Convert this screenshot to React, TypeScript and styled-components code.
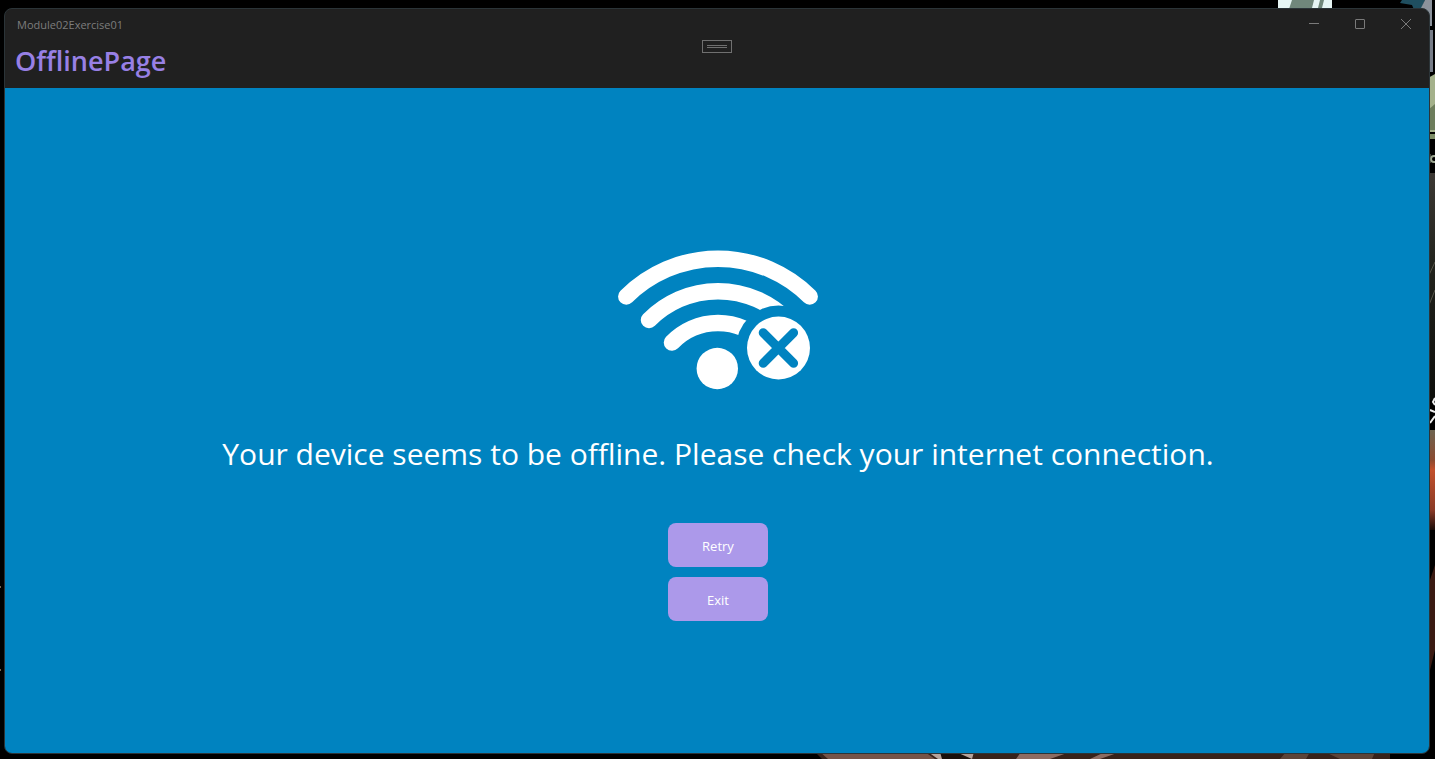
import React from "react";
import styled, { createGlobalStyle } from "styled-components";

const GlobalStyle = createGlobalStyle`
  *, *::before, *::after { box-sizing: border-box; }
  body {
    margin: 0;
    background: #000;
    font-family: "Segoe UI", "Open Sans", sans-serif;
  }
`;

const Desktop = styled.div`
  position: relative;
  display: flex;
  min-height: 100vh;
  padding: 8px 5px 5px 4px;
  overflow: hidden;
`;

const Wallpaper = styled.svg`
  position: absolute;
  inset: 0;
  width: 100%;
  height: 100%;
`;

const AppWindow = styled.main`
  position: relative;
  display: flex;
  flex: 1;
  flex-direction: column;
  border: 1px solid #2b3438;
  border-radius: 8px;
  background: #202020;
  overflow: hidden;
`;

const TitleBar = styled.header`
  display: flex;
  justify-content: space-between;
  height: 31px;
  padding-left: 12px;
`;

const WindowTitle = styled.span`
  color: #7d7d7d;
  font-size: 11px;
  line-height: 31px;
`;

const Controls = styled.div`
  display: flex;
`;

const ControlButton = styled.button`
  display: grid;
  place-items: center;
  width: 46px;
  height: 30px;
  padding: 0;
  border: 0;
  background: transparent;
  color: #7a7a7a;
`;

const NavBar = styled.div`
  display: grid;
  grid-template-columns: 1fr auto 1fr;
  align-items: start;
  height: 48px;
  padding: 0 10px;
`;

const PageTitle = styled.h1`
  margin: 0;
  color: #9880e5;
  font-size: 27px;
  font-weight: 600;
  line-height: 42px;
`;

const ToolbarHandle = styled.button`
  display: grid;
  place-items: center;
  width: 30px;
  height: 13px;
  padding: 0;
  border: 1px solid #707070;
  background: transparent;
  color: #707070;
`;

const Content = styled.section`
  display: flex;
  flex: 1;
  flex-direction: column;
  align-items: center;
  justify-content: center;
  padding: 0 10px 1px 12px;
  background: #0083c0;
`;

const OfflineIcon = styled.svg`
  width: 200px;
  height: 200px;
`;

const Message = styled.p`
  margin: 13px 0 48px;
  color: #fff;
  font-size: 30px;
  line-height: 42px;
  text-align: center;
`;

const Actions = styled.div`
  display: flex;
  flex-direction: column;
  gap: 10px;
`;

const ActionButton = styled.button`
  width: 100px;
  height: 44px;
  padding: 2px 0 0;
  border: 0;
  border-radius: 8px;
  background: #ac99ea;
  color: #fff;
  font-family: inherit;
  font-size: 13px;
  line-height: 20px;
`;

export default function App() {
  return (
    <Desktop>
      <GlobalStyle />
      <Wallpaper viewBox="0 0 1435 759" preserveAspectRatio="none" aria-hidden="true">
        <defs>
          <linearGradient id="ember" x1="0" y1="0" x2="0" y2="1">
            <stop offset="0" stopColor="#6e6450" />
            <stop offset="0.300" stopColor="#8a4a30" />
            <stop offset="0.400" stopColor="#c2502c" />
            <stop offset="0.800" stopColor="#8a3a26" />
            <stop offset="1" stopColor="#1a0c08" />
          </linearGradient>
          <linearGradient id="shade" x1="0" y1="0" x2="0" y2="1">
            <stop offset="0" stopColor="#3b3833" />
            <stop offset="0.400" stopColor="#22231d" />
            <stop offset="1" stopColor="#0d0e0b" />
          </linearGradient>
        </defs>
        <path d="M1278 0H1332V12H1278z" fill="#e6f5f4" />
        <path d="M1292 0H1314L1311 12H1288zM1320 0H1324L1321 12H1317z" fill="#70877b" />
        <path d="M1402 0H1425L1420 12H1415L1412 5L1400 3z" fill="#1f4f60" />
        <path d="M1425 0H1432V26H1426L1420 10z" fill="#8b929b" />
        <path d="M1428 30H1433V72H1428z" fill="#777d88" />
        <path d="M1428 78L1435 74V132H1428z" fill="#a4b18b" />
        <path d="M1428 110L1435 104V130H1428z" fill="#6d7d5c" />
        <path d="M1428 134H1435V139H1428z" fill="#7d8d66" />
        <circle cx="1434" cy="159" r="3" fill="none" stroke="#9ba58f" strokeWidth="2" />
        <path d="M1430 154V163" stroke="#7d8577" />
        <path d="M1428 173H1435V400H1428z" fill="url(#shade)" />
        <path d="M1429 275L1435 262M1429 305L1435 290" stroke="#55554a" />
        <path d="M1430 423L1435 416M1430 410L1435 412M1435 398L1433 402L1435 405" fill="none" stroke="#eee" strokeWidth="2" />
        <path d="M1428 430H1435V530H1428z" fill="url(#ember)" />
        <path d="M1430 580L1435 565V650L1430 670z" fill="#3a1a12" />
        <path d="M815 752H1390V759H822z" fill="#38221a" />
        <path d="M820 752H925L935 759H828z" fill="#765448" />
        <path d="M928 752H974L972 759H938z" fill="#b6a29a" />
        <path d="M940 752H956L972 759H942z" fill="#1a100c" />
        <path d="M1021 752H1070L1050 759H1016zM1105 752H1120L1100 759H1090z" fill="#8d6c62" />
        <path d="M1286 752H1310L1306 759H1280zM1325 752H1375L1372 759H1340z" fill="#5d4438" />
        <path d="M0 586H1V588H0zM0 669H1V671H0z" fill="#7b6651" />
      </Wallpaper>

      <AppWindow>
        <TitleBar>
          <WindowTitle>Module02Exercise01</WindowTitle>
          <Controls>
            <ControlButton type="button" aria-label="Minimize">
              <svg width="10" height="10" viewBox="0 0 10 10" fill="none" stroke="currentColor">
                <path d="M0 4.500H10" />
              </svg>
            </ControlButton>
            <ControlButton type="button" aria-label="Maximize">
              <svg width="10" height="10" viewBox="0 0 10 10" fill="none" stroke="currentColor">
                <rect x="0.500" y="0.500" width="9" height="9" rx="0.500" />
              </svg>
            </ControlButton>
            <ControlButton type="button" aria-label="Close">
              <svg width="10" height="10" viewBox="0 0 10 10" fill="none" stroke="currentColor">
                <path d="M0 0L10 10M10 0L0 10" />
              </svg>
            </ControlButton>
          </Controls>
        </TitleBar>
        <NavBar>
          <PageTitle>OfflinePage</PageTitle>
          <ToolbarHandle type="button" aria-label="Show toolbar">
            <svg width="20" height="5" viewBox="0 0 20 5" stroke="currentColor">
              <path d="M0 1.500H20M0 3.500H20" />
            </svg>
          </ToolbarHandle>
        </NavBar>
        <Content>
          <OfflineIcon viewBox="0 0 200 200" role="img" aria-label="No connection">
            <defs>
              <mask id="badge-gap" maskUnits="userSpaceOnUse" x="0" y="0" width="200" height="200">
                <rect width="200" height="200" fill="#fff" />
                <circle cx="160.500" cy="128" r="42.500" fill="#000" />
              </mask>
            </defs>
            <g fill="none" stroke="#fff" strokeWidth="16.500" strokeLinecap="round">
              <path d="M8.300 76.500A130 130 0 0 1 191.700 76.500" />
              <g mask="url(#badge-gap)">
                <path d="M31 100A97 97 0 0 1 169 100" />
                <path d="M54 122.500A64 64 0 0 1 146 122.500" />
              </g>
            </g>
            <circle cx="99.300" cy="148.500" r="20.700" fill="#fff" />
            <circle cx="160.500" cy="128" r="31.500" fill="#fff" />
            <path
              d="M145.200 112.800L175.600 143.200M175.600 112.800L145.200 143.200"
              stroke="#0083c0"
              strokeWidth="9"
              strokeLinecap="round"
            />
          </OfflineIcon>
          <Message>Your device seems to be offline. Please check your internet connection.</Message>
          <Actions>
            <ActionButton type="button">Retry</ActionButton>
            <ActionButton type="button">Exit</ActionButton>
          </Actions>
        </Content>
      </AppWindow>
    </Desktop>
  );
}
